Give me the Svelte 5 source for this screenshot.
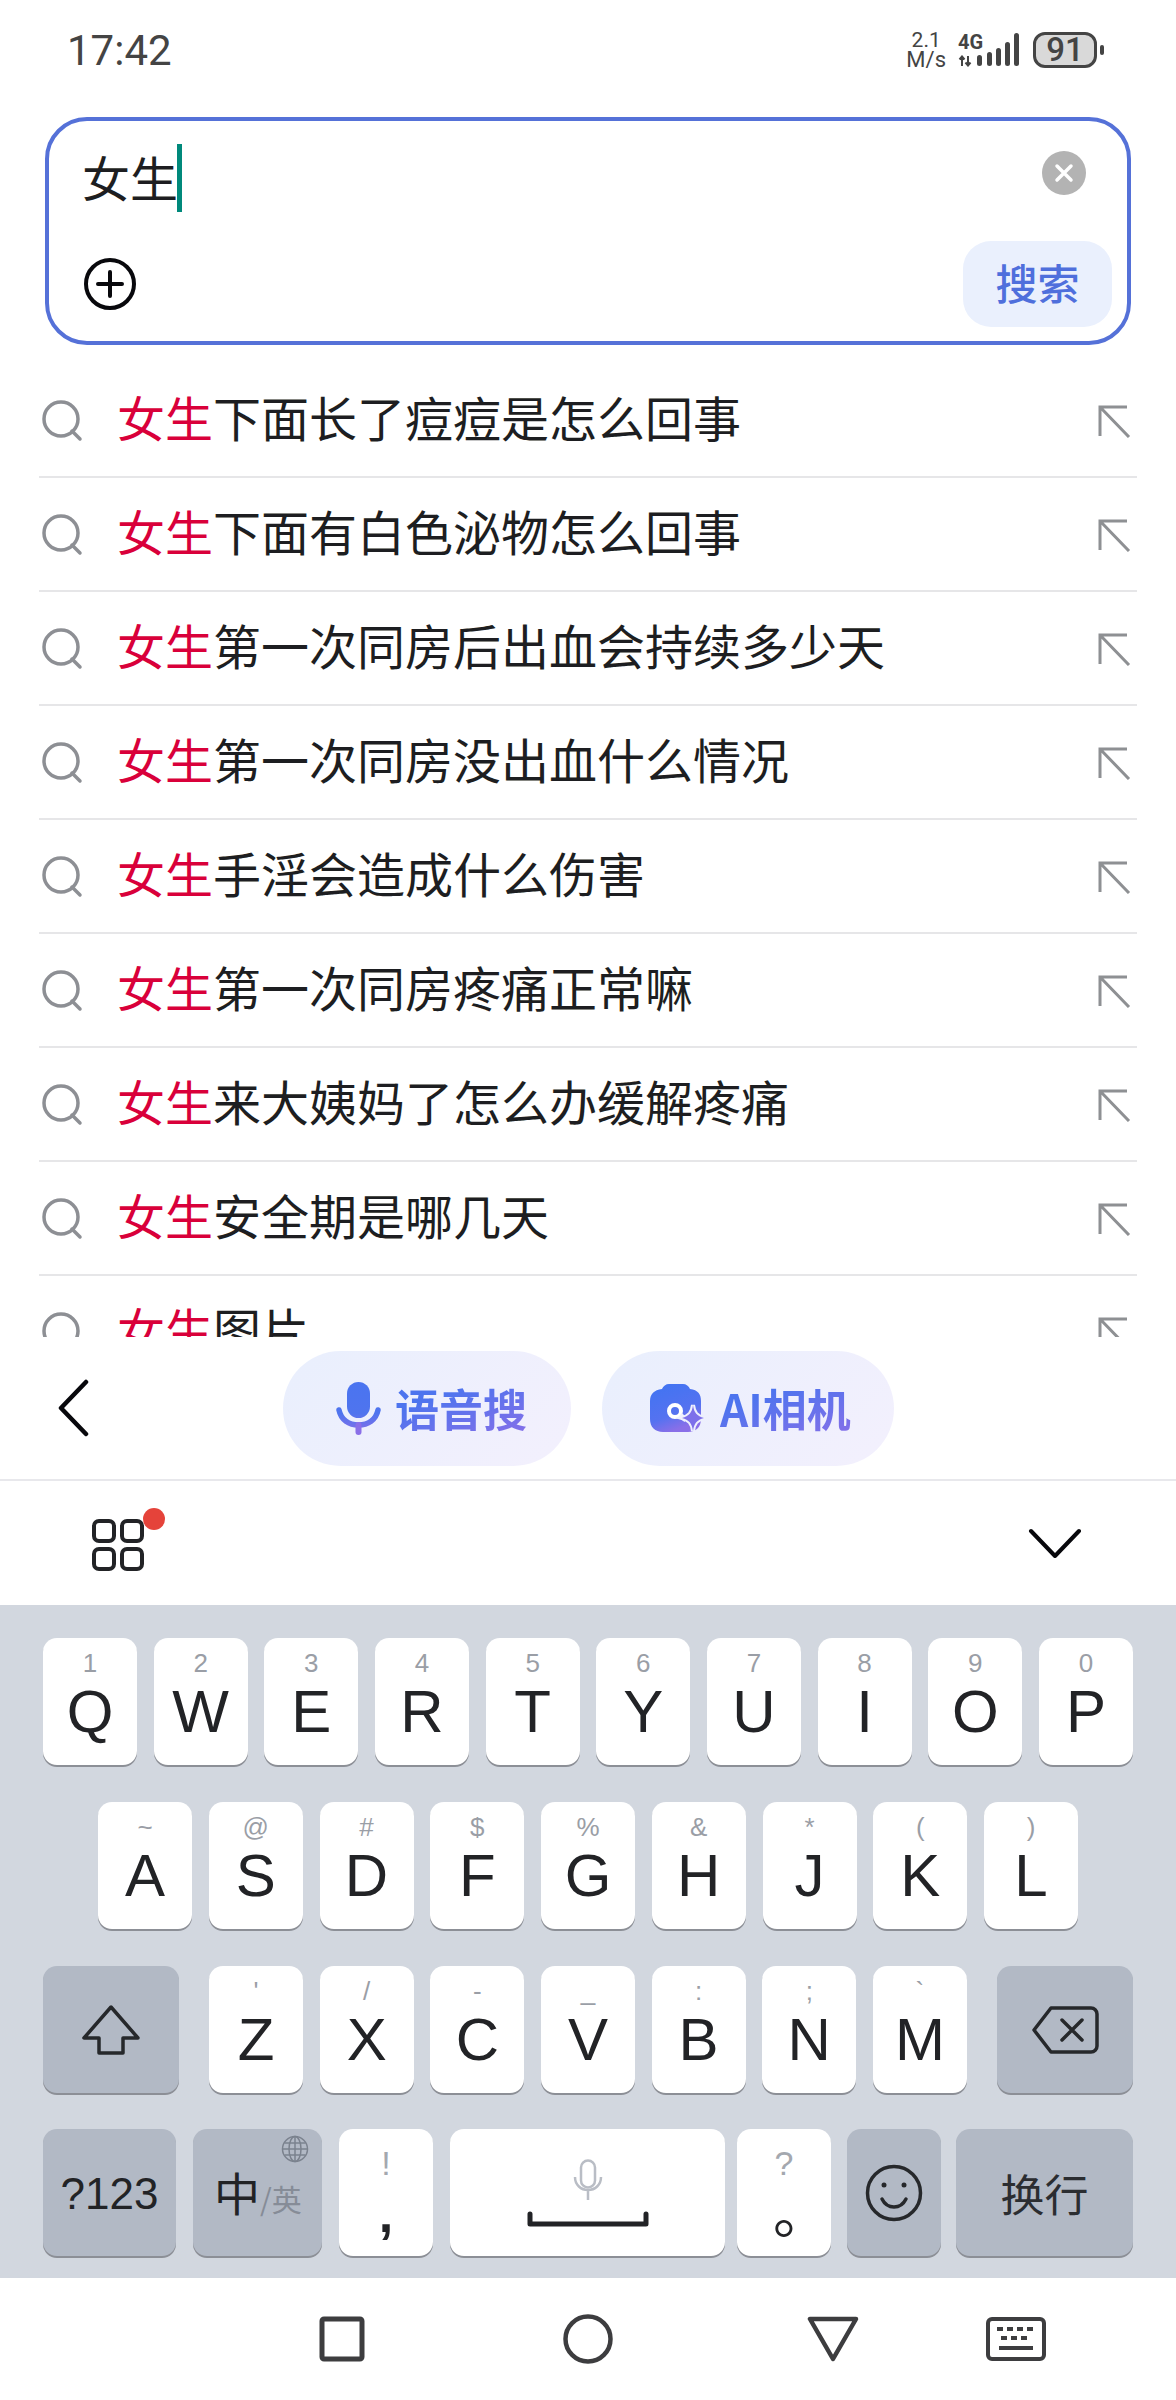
<script>
  const suggestions = [
    '下面长了痘痘是怎么回事',
    '下面有白色泌物怎么回事',
    '第一次同房后出血会持续多少天',
    '第一次同房没出血什么情况',
    '手淫会造成什么伤害',
    '第一次同房疼痛正常嘛',
    '来大姨妈了怎么办缓解疼痛',
    '安全期是哪几天',
    '图片'
  ];

  const row1 = [['Q', '1'], ['W', '2'], ['E', '3'], ['R', '4'], ['T', '5'], ['Y', '6'], ['U', '7'], ['I', '8'], ['O', '9'], ['P', '0']];
  const row2 = [['A', '~'], ['S', '@'], ['D', '#'], ['F', '$'], ['G', '%'], ['H', '&'], ['J', '*'], ['K', '('], ['L', ')']];
  const row3 = [['Z', "'"], ['X', '/'], ['C', '-'], ['V', '_'], ['B', ':'], ['N', ';'], ['M', '`']];
</script>

{#snippet letterKey(k)}
  <div class="key">
    <span class="hint">{k[1]}</span>
    <span class="letter">{k[0]}</span>
  </div>
{/snippet}

<div class="page">
  <header class="status">
    <span class="time">17:42</span>
    <div class="status-right">
      <div class="speed"><span>2.1</span><span class="unit">M/s</span></div>
      <div class="net">
        <span>4G</span>
        <svg width="14" height="12" viewBox="0 0 14 12"><path d="M4 11V2M1.500 4.500 4 1.500l2.500 3M10 1v9M7.500 7.500 10 10.500l2.500-3" fill="none" stroke="#444" stroke-width="2"/></svg>
      </div>
      <svg class="bars" width="44" height="36" viewBox="0 0 44 36" fill="#444">
        <rect x="0" y="23" width="5" height="11" rx="2.500"/>
        <rect x="10" y="20" width="5" height="14" rx="2.500"/>
        <rect x="19" y="16" width="5" height="18" rx="2.500"/>
        <rect x="28" y="10" width="5" height="24" rx="2.500"/>
        <rect x="37" y="1" width="5" height="33" rx="2.500"/>
      </svg>
      <div class="battery">91</div>
      <div class="tip"></div>
    </div>
  </header>

  <section class="search">
    <div class="input-row">
      <span class="typed">女生</span><span class="caret"></span>
      <svg class="clear" width="44" height="44" viewBox="0 0 44 44">
        <circle cx="22" cy="22" r="22" fill="#b3b3b3"/>
        <path d="M15 15l14 14M29 15 15 29" stroke="#fff" stroke-width="3.500" stroke-linecap="round"/>
      </svg>
    </div>
    <div class="action-row">
      <svg width="52" height="52" viewBox="0 0 52 52" fill="none" stroke="#08080c" stroke-width="4">
        <circle cx="26" cy="26" r="24"/>
        <path d="M26 14v24M14 26h24" stroke-linecap="round"/>
      </svg>
      <button class="go">搜索</button>
    </div>
  </section>

  <ul class="list">
    {#each suggestions as item}
      <li class="row">
        <svg class="lens" width="42" height="42" viewBox="0 0 42 42" fill="none" stroke="#8d8f94" stroke-width="3.500">
          <circle cx="19" cy="19" r="17"/>
          <path d="M30 31l8 8" stroke-linecap="round"/>
        </svg>
        <span class="label"><em>女生</em>{item}</span>
        <svg class="fill-arrow" width="34" height="34" viewBox="0 0 34 34" fill="none" stroke="#8e9093" stroke-width="3">
          <path d="M30 3H3v29M3 3l29 30"/>
        </svg>
      </li>
    {/each}
  </ul>

  <div class="chip-bar">
    <svg class="back" width="32" height="58" viewBox="0 0 32 58" fill="none" stroke="#08080c" stroke-width="4.500" stroke-linecap="round" stroke-linejoin="round">
      <path d="M29 3 4 29l25 26"/>
    </svg>
    <div class="chip">
      <svg width="46" height="54" viewBox="0 0 46 54">
        <defs>
          <linearGradient id="mic" gradientUnits="userSpaceOnUse" x1="0" y1="0" x2="0" y2="54"><stop offset="0" stop-color="#4a74f0"/><stop offset="0.6" stop-color="#4f74ee"/><stop offset="1" stop-color="#8a6fe8"/></linearGradient>
        </defs>
        <rect x="12" y="1" width="23" height="36" rx="11.500" fill="url(#mic)"/>
        <path d="M4 29c2 10 10 15 19.500 15S41 39 43 29" fill="none" stroke="url(#mic)" stroke-width="5.500" stroke-linecap="round"/>
        <path d="M23.500 44v7" stroke="#8a6fe8" stroke-width="6" stroke-linecap="round"/>
      </svg>
      <span class="chip-text">语音搜</span>
    </div>
    <div class="chip camera">
      <svg width="56" height="50" viewBox="0 0 56 50">
        <defs>
          <linearGradient id="cam" x1="0" y1="0" x2="0.400" y2="1"><stop offset="0" stop-color="#3f74f2"/><stop offset="0.7" stop-color="#5572f0"/><stop offset="1" stop-color="#8a6fe8"/></linearGradient>
        </defs>
        <path d="M13 6c1-3 4-5 7-5h14c3 0 6 2 7 5 8 1 11 5 11 12v18c0 8-5 13-13 13H14C6 49 1 44 1 36V18C1 11 5 7 13 6z" fill="url(#cam)"/>
        <circle cx="26" cy="28" r="6" fill="none" stroke="#fff" stroke-width="4"/>
        <path d="M31 32 37 37" stroke="#eef0fd" stroke-width="5"/>
        <path d="M44 22c1 8 4 11 11 13-7 2-10 5-11 13-1-8-4-11-11-13 7-2 10-5 11-13z" fill="#7d70ea" stroke="#eef0fd" stroke-width="4" paint-order="stroke"/>
      </svg>
      <span class="chip-text">AI相机</span>
    </div>
  </div>

  <div class="toolbar">
    <div class="apps">
      <svg width="52" height="52" viewBox="0 0 52 52" fill="none" stroke="#222326" stroke-width="4">
        <rect x="2" y="2" width="20" height="20" rx="5"/>
        <rect x="30" y="2" width="20" height="20" rx="5"/>
        <rect x="2" y="30" width="20" height="20" rx="5"/>
        <rect x="30" y="30" width="20" height="20" rx="5"/>
      </svg>
      <span class="dot"></span>
    </div>
    <svg width="54" height="30" viewBox="0 0 54 30" fill="none" stroke="#08080c" stroke-width="4" stroke-linecap="round" stroke-linejoin="round">
      <path d="M3 3l24 25L51 3"/>
    </svg>
  </div>

  <div class="keyboard">
    <div class="kb-row">
      {#each row1 as k}{@render letterKey(k)}{/each}
    </div>
    <div class="kb-row middle">
      {#each row2 as k}{@render letterKey(k)}{/each}
    </div>
    <div class="kb-row">
      <div class="key fn wide">
        <svg width="58" height="50" viewBox="0 0 58 50" fill="none" stroke="#26282b" stroke-width="3.500" stroke-linejoin="round">
          <path d="M29 2 2 33h15v15h24V33h15z"/>
        </svg>
      </div>
      <div class="letters">
        {#each row3 as k}{@render letterKey(k)}{/each}
      </div>
      <div class="key fn wide">
        <svg width="68" height="50" viewBox="0 0 68 50" fill="none" stroke="#26282b" stroke-width="3.500" stroke-linejoin="round">
          <path d="M20 3h40a6 6 0 0 1 6 6v32a6 6 0 0 1-6 6H20L3 25z"/>
          <path d="M31 15l20 20M51 15 31 35" stroke-linecap="round"/>
        </svg>
      </div>
    </div>
    <div class="kb-row last">
      <div class="cluster left">
        <div class="key fn sym"><span class="num">?123</span></div>
        <div class="key fn lang">
          <svg class="globe" width="28" height="28" viewBox="0 0 28 28" fill="none" stroke="#7b828e" stroke-width="1.500">
            <circle cx="14" cy="14" r="12.500"/>
            <ellipse cx="14" cy="14" rx="6" ry="12.500"/>
            <path d="M14 1.500v25M1.500 14h25M3.500 8h21M3.500 20h21"/>
          </svg>
          <span class="zh">中</span><span class="en">/英</span>
        </div>
        <div class="key punct">
          <span class="p-hint">!</span>
          <span class="comma">,</span>
        </div>
        <div class="key space">
          <svg class="space-mic" width="30" height="42" viewBox="0 0 30 42" fill="none" stroke="#b9bdc5" stroke-width="2.500">
            <rect x="8" y="1.500" width="14" height="27" rx="7"/>
            <path d="M2 18c0 8 6 13 13 13s13-5 13-13M15 31v10"/>
          </svg>
          <svg width="122" height="16" viewBox="0 0 122 16" fill="none" stroke="#222326" stroke-width="5" stroke-linecap="round" stroke-linejoin="round">
            <path d="M3 3v10h116V3"/>
          </svg>
        </div>
      </div>
      <div class="cluster right">
        <div class="key punct">
          <span class="p-hint">?</span>
          <span class="period">。</span>
        </div>
        <div class="key fn emoji">
          <svg width="58" height="60" viewBox="0 0 58 60" fill="none" stroke="#26282b" stroke-width="3.500" stroke-linecap="round">
            <circle cx="29" cy="30" r="26.500"/>
            <circle cx="19" cy="22" r="2.500" fill="#26282b" stroke="none"/>
            <circle cx="39" cy="22" r="2.500" fill="#26282b" stroke="none"/>
            <path d="M17 36c3 6 8 8 12 8s9-2 12-8"/>
          </svg>
        </div>
        <div class="key fn enter">换行</div>
      </div>
    </div>
  </div>

  <nav class="nav">
    <svg class="nav-square" width="46" height="46" viewBox="0 0 46 46" fill="none" stroke="#3d3d3f" stroke-width="5" stroke-linejoin="round">
      <rect x="3" y="3" width="40" height="40" rx="2"/>
    </svg>
    <svg class="nav-circle" width="50" height="50" viewBox="0 0 50 50" fill="none" stroke="#3d3d3f" stroke-width="4.500">
      <circle cx="25" cy="25" r="22.500"/>
    </svg>
    <svg class="nav-triangle" width="52" height="46" viewBox="0 0 52 46" fill="none" stroke="#3d3d3f" stroke-width="4.500" stroke-linejoin="round">
      <path d="M3 3h46L26 43z"/>
    </svg>
    <svg class="nav-keys" width="60" height="44" viewBox="0 0 60 44" fill="none" stroke="#3d3d3f" stroke-width="4">
      <rect x="2" y="2" width="56" height="40" rx="4"/>
      <path d="M11 12h37M15 21h29" stroke-dasharray="6 4"/>
      <path d="M13 31h34" stroke-width="4"/>
    </svg>
  </nav>
</div>

<style>
  :global(body) {
    margin: 0;
    background: #fff;
  }

  .page {
    width: 1176px;
    height: 2400px;
    display: flex;
    flex-direction: column;
    overflow: hidden;
    background: #fff;
    font-family: "Noto Sans CJK SC", "Liberation Sans", sans-serif;
    color: #1d1e21;
  }

  /* status bar */
  .status {
    height: 100px;
    margin-bottom: 17px;
    padding: 0 72px 0 67px;
    display: flex;
    align-items: center;
    justify-content: space-between;
    flex: none;
    box-sizing: border-box;
  }

  .time {
    font-family: Roboto, sans-serif;
    font-size: 42px;
    color: #444;
  }

  .status-right {
    display: flex;
    align-items: center;
    font-family: Roboto, sans-serif;
    color: #444;
  }

  .speed {
    display: flex;
    flex-direction: column;
    align-items: center;
    font-size: 21px;
    line-height: 20px;
    margin-right: 12px;
  }

  .speed .unit {
    font-size: 22px;
  }

  .net {
    display: flex;
    flex-direction: column;
    align-items: flex-start;
    gap: 5px;
    font-size: 20px;
    line-height: 16px;
    font-weight: 700;
    width: 20px;
    white-space: nowrap;
  }

  .bars {
    margin-left: -1px;
  }

  .battery {
    margin-left: 12px;
    width: 64px;
    height: 36px;
    box-sizing: border-box;
    border: 3px solid #444;
    border-radius: 12px;
    background: #d9d9d9;
    font-size: 33px;
    font-weight: 500;
    line-height: 30px;
    text-align: center;
  }

  .tip {
    width: 4px;
    height: 10px;
    margin-left: 3px;
    border-radius: 2px;
    background: #444;
  }

  /* search box */
  .search {
    width: 1086px;
    height: 228px;
    margin-left: 45px;
    flex: none;
    box-sizing: border-box;
    border: 4px solid #5571d8;
    border-radius: 42px;
    padding: 0 15px 0 35px;
    display: flex;
    flex-direction: column;
  }

  .input-row {
    height: 120px;
    display: flex;
    align-items: center;
    flex: none;
    padding-bottom: 6px;
    box-sizing: border-box;
  }

  .typed {
    font-size: 48px;
    line-height: 68px;
    margin-left: -2px;
    margin-top: -4px;
  }

  .caret {
    width: 5px;
    height: 68px;
    background: #00897b;
    margin-left: -1px;
  }

  .clear {
    margin-left: auto;
    margin-right: 26px;
    margin-top: -10px;
  }

  .action-row {
    display: flex;
    align-items: center;
    justify-content: space-between;
  }

  .go {
    width: 149px;
    height: 86px;
    border: none;
    border-radius: 28px;
    background: #eaf0fd;
    color: #4f6fdc;
    font: 500 42px "Noto Sans CJK SC", sans-serif;
    padding: 0 0 5px;
  }

  /* suggestion list */
  .list {
    list-style: none;
    margin: 0;
    padding: 19px 39px 0;
    height: 992px;
    flex: none;
    box-sizing: border-box;
    overflow: hidden;
  }

  .row {
    height: 114px;
    box-sizing: border-box;
    border-bottom: 2px solid #e6e6e8;
    display: flex;
    align-items: center;
  }

  .lens {
    margin-left: 3px;
    margin-top: 2px;
    flex: none;
  }

  .label {
    margin-left: 33px;
    margin-top: -8px;
    font-size: 48px;
    line-height: 60px;
    white-space: nowrap;
  }

  .label em {
    font-style: normal;
    color: #d9003a;
  }

  .fill-arrow {
    margin-left: auto;
    margin-right: 6px;
    margin-top: 2px;
    flex: none;
  }

  /* voice / camera chips */
  .chip-bar {
    height: 144px;
    flex: none;
    box-sizing: border-box;
    border-bottom: 2px solid #e8e8ec;
    padding-left: 57px;
    display: flex;
    align-items: center;
    gap: 31px;
  }

  .back {
    margin-right: 163px;
  }

  .chip {
    height: 115px;
    padding: 0 44px 0 52px;
    border-radius: 58px;
    background: linear-gradient(135deg, #e9effd, #f3f0fd);
    display: flex;
    align-items: center;
    gap: 14px;
  }

  .chip.camera {
    padding: 0 43px 0 47px;
    gap: 15px;
  }

  .chip-text {
    font-size: 44px;
    font-weight: 700;
    background: linear-gradient(160deg, #4d74ee 30%, #8a6fe8);
    -webkit-background-clip: text;
    background-clip: text;
    color: transparent;
    white-space: nowrap;
  }

  .toolbar {
    height: 124px;
    flex: none;
    box-sizing: border-box;
    padding: 0 94px 0 92px;
    display: flex;
    align-items: center;
    justify-content: space-between;
  }

  .apps {
    position: relative;
    width: 52px;
    height: 52px;
    margin-top: 4px;
  }

  .dot {
    position: absolute;
    top: -11px;
    right: -21px;
    width: 22px;
    height: 22px;
    border-radius: 50%;
    background: #e5433a;
  }

  /* keyboard */
  .keyboard {
    height: 673px;
    flex: none;
    box-sizing: border-box;
    background: #d2d7df;
    padding: 33px 43px 0;
    display: flex;
    flex-direction: column;
    gap: 37px;
  }

  .kb-row {
    height: 127px;
    display: flex;
    justify-content: space-between;
  }

  .kb-row.middle {
    padding: 0 55px;
  }

  .letters {
    width: 758px;
    display: flex;
    justify-content: space-between;
  }

  .key {
    width: 94px;
    height: 127px;
    box-sizing: border-box;
    border-radius: 14px;
    background: #fff;
    box-shadow: 0 2px 0 #8c8f96;
    display: flex;
    flex-direction: column;
    align-items: center;
    padding-top: 12px;
    font-family: "Liberation Sans", sans-serif;
    color: #222326;
    position: relative;
  }

  .hint {
    font-size: 26px;
    line-height: 26px;
    height: 26px;
    color: #9a9ea6;
  }

  .letter {
    margin-top: 6px;
    font-size: 60px;
    line-height: 60px;
  }

  .key.fn {
    background: #b2b9c5;
    padding-top: 0;
    justify-content: center;
  }

  .key.wide {
    width: 136px;
  }

  .cluster {
    display: flex;
  }

  .cluster.left {
    gap: 17px;
  }

  .cluster.right {
    gap: 15px;
  }

  .key.sym {
    width: 133px;
  }

  .num {
    font-size: 44px;
    margin-top: 2px;
  }

  .key.lang {
    width: 129px;
    flex-direction: row;
    align-items: baseline;
    justify-content: flex-start;
    padding-left: 21px;
    padding-top: 30px;
    font-family: "Noto Sans CJK SC", sans-serif;
  }

  .globe {
    position: absolute;
    top: 6px;
    right: 13px;
  }

  .zh {
    font-size: 46px;
    line-height: 64px;
  }

  .en {
    font-size: 30px;
    color: #868c97;
    white-space: nowrap;
  }

  .p-hint {
    font-size: 34px;
    line-height: 36px;
    color: #a4a8af;
    margin-top: 4px;
  }

  .comma {
    font-size: 52px;
    font-weight: 700;
    line-height: 40px;
    margin-top: 13px;
  }

  .period {
    font-family: "Noto Sans CJK SC", sans-serif;
    font-size: 56px;
    line-height: 56px;
    padding-left: 34px;
  }

  .key.space {
    width: 275px;
    padding-top: 30px;
  }

  .space-mic {
    margin-bottom: 10px;
  }

  .key.emoji {
    width: 94px;
    margin-left: 1px;
  }

  .key.enter {
    width: 177px;
    font-family: "Noto Sans CJK SC", sans-serif;
    font-size: 44px;
    color: #2b2d31;
  }

  .kb-row.last {
    margin-top: -1px;
  }

  /* nav bar */
  .nav {
    height: 122px;
    flex: none;
    box-sizing: border-box;
    padding-left: 319px;
    display: flex;
    align-items: center;
  }

  .nav-circle {
    margin-left: 198px;
  }

  .nav-triangle {
    margin-left: 194px;
  }

  .nav-keys {
    margin-left: 127px;
  }
</style>
